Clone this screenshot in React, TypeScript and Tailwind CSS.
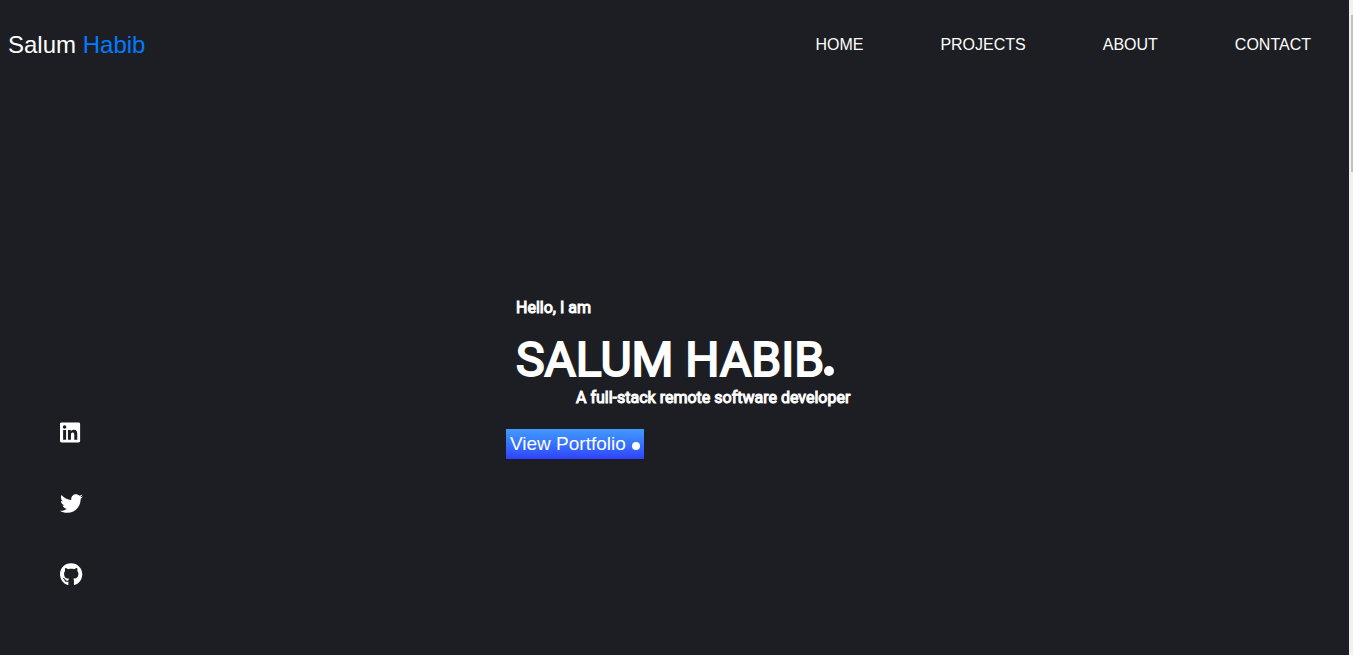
import React from "react";
import { FaGithub, FaLinkedin, FaTwitter } from "react-icons/fa";

const links = [
  { label: "HOME", href: "#home" },
  { label: "PROJECTS", href: "#projects" },
  { label: "ABOUT", href: "#about" },
  { label: "CONTACT", href: "#contact" },
];

const socials = [
  { label: "LinkedIn", href: "#linkedin", Icon: FaLinkedin },
  { label: "Twitter", href: "#twitter", Icon: FaTwitter },
  { label: "GitHub", href: "#github", Icon: FaGithub },
];

export default function App() {
  return (
    <div className="flex min-h-screen bg-[#1d1e23] font-['Liberation_Sans',Arial,sans-serif] text-white">
      <div className="flex min-w-0 grow flex-col">
        <header className="flex h-[90px] items-center justify-between pr-[38px] pl-2">
          <a href="#home" className="text-2xl">
            Salum <span className="text-[#007bff]">Habib</span>
          </a>
          <nav className="flex gap-[77px] text-base">
            {links.map(({ label, href }) => (
              <a key={label} href={href}>
                {label}
              </a>
            ))}
          </nav>
        </header>

        <main className="grid grow grid-cols-[506px_1fr] pb-[69px]">
          <ul className="flex flex-col gap-12 self-end pl-[60px]">
            {socials.map(({ label, href, Icon }) => (
              <li key={label}>
                <a href={href} aria-label={label} className="block">
                  <Icon className="size-[23px]" preserveAspectRatio="xMinYMid meet" />
                </a>
              </li>
            ))}
          </ul>

          <section className="pt-[206px]">
            <div className="pl-2.5 font-['Roboto',sans-serif]">
              <p className="text-base leading-6 [-webkit-text-stroke:1px_white]">Hello, I am</p>
              <h1 className="mt-3 flex items-end text-5xl leading-[56px] font-normal [-webkit-text-stroke:2px_white]">
                SALUM HABIB
                <span className="mb-3 size-2.5 rounded-full bg-white" />
              </h1>
              <p className="-mt-0.5 pl-[60px] text-base leading-6 [-webkit-text-stroke:1px_white]">
                A full-stack remote software developer
              </p>
            </div>
            <a
              href="#projects"
              className="mt-[19px] flex h-[30px] w-fit items-center gap-1.5 bg-linear-to-b from-[#4499ff] to-[#3340ff] px-1 text-[19px]"
            >
              View Portfolio
              <span className="mt-1 size-2 rounded-full bg-white" />
            </a>
          </section>
        </main>
      </div>

      <div className="w-1 shrink-0 bg-[#f1f1f1] pt-[15px] pl-0.5">
        <div className="h-[157px] bg-[#c1c1c1]" />
      </div>
    </div>
  );
}
